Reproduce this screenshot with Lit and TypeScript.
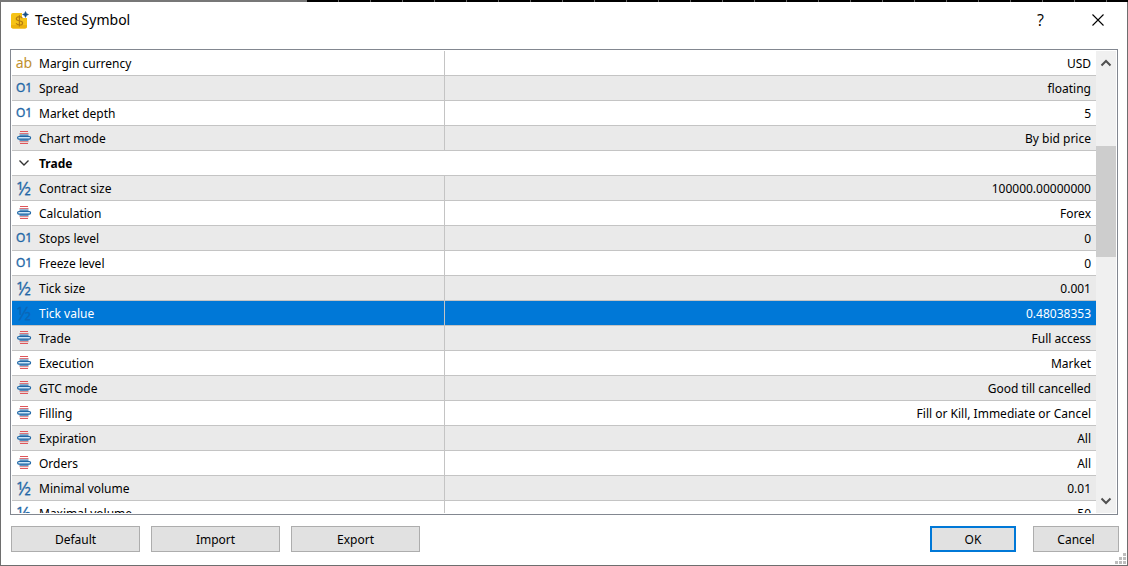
import { LitElement, html, css, svg } from "lit";
import { customElement, state } from "lit/decorators.js";
import { classMap } from "lit/directives/class-map.js";

type Kind = "text" | "int" | "real" | "enum" | "group";
interface Row {
  kind: Kind;
  name: string;
  value?: string;
}

const ROWS: Row[] = [
  { kind: "text", name: "Margin currency", value: "USD" },
  { kind: "int", name: "Spread", value: "floating" },
  { kind: "int", name: "Market depth", value: "5" },
  { kind: "enum", name: "Chart mode", value: "By bid price" },
  { kind: "group", name: "Trade" },
  { kind: "real", name: "Contract size", value: "100000.00000000" },
  { kind: "enum", name: "Calculation", value: "Forex" },
  { kind: "int", name: "Stops level", value: "0" },
  { kind: "int", name: "Freeze level", value: "0" },
  { kind: "real", name: "Tick size", value: "0.001" },
  { kind: "real", name: "Tick value", value: "0.48038353" },
  { kind: "enum", name: "Trade", value: "Full access" },
  { kind: "enum", name: "Execution", value: "Market" },
  { kind: "enum", name: "GTC mode", value: "Good till cancelled" },
  { kind: "enum", name: "Filling", value: "Fill or Kill, Immediate or Cancel" },
  { kind: "enum", name: "Expiration", value: "All" },
  { kind: "enum", name: "Orders", value: "All" },
  { kind: "real", name: "Minimal volume", value: "0.01" },
  { kind: "real", name: "Maximal volume", value: "50" },
];

@customElement("type-icon")
export class TypeIcon extends LitElement {
  static properties = { kind: {} };
  declare kind: Kind;

  static styles = css`
    :host {
      display: flex;
      align-items: center;
      justify-content: center;
      width: 16px;
      height: 24px;
      color: var(--icon-color, #1f67a6);
    }
    svg {
      display: block;
    }
    .ab {
      color: #c09030;
      font: 14px/22px "Noto Sans", sans-serif;
    }
    .int {
      font: 12px/24px "Open Sans", sans-serif;
      -webkit-text-stroke: 0.4px currentColor;
    }
    .real {
      font: 18px/24px "Open Sans", sans-serif;
      -webkit-text-stroke: 0.3px currentColor;
    }
  `;

  render() {
    switch (this.kind) {
      case "text":
        return html`<span class="ab">ab</span>`;
      case "int":
        return html`<span class="int">O1</span>`;
      case "real":
        return html`<span class="real">½</span>`;
      case "group":
        return html`<svg width="16" height="16" viewBox="0 0 16 16" fill="none">
          <path d="M3.500 5.500L8 10L12.500 5.500" stroke="#333" stroke-width="1.400" />
        </svg>`;
      default:
        return html`<svg width="16" height="16" viewBox="0 0 16 16">
          ${svg`
          <path d="M4 1.500h8M4 13.500h8" stroke="#e0555a" stroke-width="1.200"/>
          <path d="M3.500 3.500h9M3.500 11.700h9" stroke="#d8757c" stroke-width="1"/>
          <path d="M3.500 5.200h9M3.500 10.200h9" stroke="#2a70ae" stroke-width="1.200"/>
          <rect x="1.600" y="6.500" width="13" height="2.600" rx="1.300" fill="#cfe6f8" stroke="#1f67a6" stroke-width="1.200"/>`}
        </svg>`;
    }
  }
}

@customElement("app-root")
export class AppRoot extends LitElement {
  @state() private selected = 10;

  static styles = css`
    :host {
      display: flex;
      flex-direction: column;
      box-sizing: border-box;
      height: 100vh;
      padding: 0 9px 13px;
      border: 1px solid #6e6e6e;
      border-top: 0;
      background: #fff;
      color: #000;
      font: 12px/16px "Noto Sans", sans-serif;
      position: relative;
    }
    .backdrop {
      display: flex;
      flex: none;
      height: 2px;
      margin: 0 -10px;
      background: #777;
    }
    .backdrop::after {
      content: "";
      flex: 1;
      margin-left: 307px;
      background: repeating-linear-gradient(90deg, #000 0 31px, #666 31px 32px);
    }
    header {
      display: flex;
      flex: none;
      align-items: center;
      height: 36px;
      margin-bottom: 11px;
    }
    h1 {
      flex: 1;
      margin: 0 0 0 6px;
      font: 14px/20px "Noto Sans", sans-serif;
    }
    .caption {
      display: flex;
      align-items: center;
      justify-content: center;
      width: 57px;
      height: 32px;
      padding: 0;
      border: 0;
      background: none;
      color: #000;
      font: 16px/20px "Open Sans", sans-serif;
    }
    .close {
      margin-right: -8px;
    }
    .grid {
      display: flex;
      flex: 1;
      min-height: 0;
      padding: 1px;
      border: 1px solid #828790;
    }
    .rows {
      flex: 1;
      overflow: hidden;
    }
    table {
      width: 100%;
      border-collapse: separate;
      border-spacing: 0;
      table-layout: fixed;
    }
    .name-col {
      width: 39.9%;
    }
    th,
    td {
      box-sizing: border-box;
      height: 25px;
      padding: 0;
      border-bottom: 1px solid #c4c4c4;
      font-weight: 400;
      text-align: left;
      white-space: nowrap;
    }
    th {
      border-right: 1px solid #c4c4c4;
    }
    td {
      padding: 2px 5px 0 0;
      text-align: right;
    }
    tr:nth-child(even) {
      background: #eaeaea;
    }
    .group th {
      border-right: 0;
      font-weight: 700;
    }
    .label {
      display: flex;
      align-items: center;
      gap: 7px;
      height: 24px;
      padding-left: 4px;
    }
    .label span {
      padding-top: 2px;
    }
    .label type-icon {
      padding-bottom: 1px;
    }
    tr.selected {
      background: #0078d7;
      color: #fff;
      --icon-color: #0a66b8;
    }
    .scroll {
      display: flex;
      flex-direction: column;
      width: 20px;
      background: #f0f0f0;
    }
    .arrow {
      display: flex;
      align-items: center;
      justify-content: center;
      height: 24px;
      padding: 0;
      border: 0;
      background: none;
    }
    .track {
      display: grid;
      grid-template-rows: 71fr 111fr 231fr;
      flex: 1;
    }
    .thumb {
      grid-row: 2;
      background: #cdcdcd;
    }
    footer {
      display: flex;
      flex: none;
      gap: 11px;
      margin: 11px -1px 0 1px;
    }
    .push {
      width: 129px;
      height: 26px;
      padding: 2px 0 0;
      border: 1px solid #adadad;
      background: #e1e1e1;
      color: #000;
      font: inherit;
    }
    .small {
      width: 86px;
    }
    .ok {
      margin: 0 6px 0 auto;
      border: 2px solid #0078d7;
    }
    .grip {
      position: absolute;
      right: 1px;
      bottom: 1px;
    }
  `;

  render() {
    return html`
      <div class="backdrop"></div>
      <header>
        <svg width="19" height="19" viewBox="0 0 19 19" aria-hidden="true">
          <path d="M3 2H12v5h5v8.500a2 2 0 0 1-2 2H3a2 2 0 0 1-2-2V4a2 2 0 0 1 2-2z" fill="#f6c316" />
          <path d="M1 14v1.500a2 2 0 0 0 2 2H15a2 2 0 0 0 2-2V14z" fill="#edb20c" />
          <path
            d="M12.400 7.200C11.600 6 10.600 5.700 9.300 5.700 7.500 5.700 6.300 6.500 6.300 7.800c0 3 6.300 1.200 6.300 4.100 0 1.300-1.300 2.100-3.100 2.100-1.500 0-2.700-.5-3.400-1.700M9.400 4.200v11.400"
            fill="none" stroke="#b57d10" stroke-width="1.200" />
          <path d="M15.500 0.500l1 2 2 1-2 1-1 2-1-2-2-1 2-1z" fill="#174f86" stroke="#174f86" stroke-width=".5" />
        </svg>
        <h1>Tested Symbol</h1>
        <button class="caption" aria-label="Help">?</button>
        <button class="caption close" aria-label="Close">
          <svg width="12" height="12" viewBox="0 0 12 12">
            <path d="M.5.5l11 11M11.500.5l-11 11" stroke="#000" stroke-width="1.100" />
          </svg>
        </button>
      </header>
      <div class="grid">
        <div class="rows">
          <table>
            <colgroup><col class="name-col" /><col /></colgroup>
            <tbody>
              ${ROWS.map(
                (r, i) => html`<tr
                  class=${classMap({ group: r.kind === "group", selected: i === this.selected })}
                  @click=${() => (this.selected = i)}
                >
                  <th scope="row" colspan=${r.kind === "group" ? 2 : 1}>
                    <div class="label"><type-icon .kind=${r.kind}></type-icon><span>${r.name}</span></div>
                  </th>
                  ${r.kind === "group" ? "" : html`<td>${r.value}</td>`}
                </tr>`
              )}
            </tbody>
          </table>
        </div>
        <div class="scroll">
          <button class="arrow" aria-label="Scroll up">
            <svg width="12" height="8" viewBox="0 0 12 8"><path d="M1.500 6.500L6 2l4.500 4.500" fill="none" stroke="#505050" stroke-width="2" /></svg>
          </button>
          <div class="track"><div class="thumb"></div></div>
          <button class="arrow" aria-label="Scroll down">
            <svg width="12" height="8" viewBox="0 0 12 8"><path d="M1.500 1.500L6 6l4.500-4.500" fill="none" stroke="#505050" stroke-width="2" /></svg>
          </button>
        </div>
      </div>
      <footer>
        <button class="push">Default</button>
        <button class="push">Import</button>
        <button class="push">Export</button>
        <button class="push small ok">OK</button>
        <button class="push small">Cancel</button>
      </footer>
      <svg class="grip" width="11" height="11" viewBox="0 0 11 11" fill="#bdbdbd" aria-hidden="true">
        <path d="M8 0h3v3H8zM4 4h3v3H4zM8 4h3v3H8zM0 8h3v3H0zM4 8h3v3H4zM8 8h3v3H8z" />
      </svg>
    `;
  }
}
